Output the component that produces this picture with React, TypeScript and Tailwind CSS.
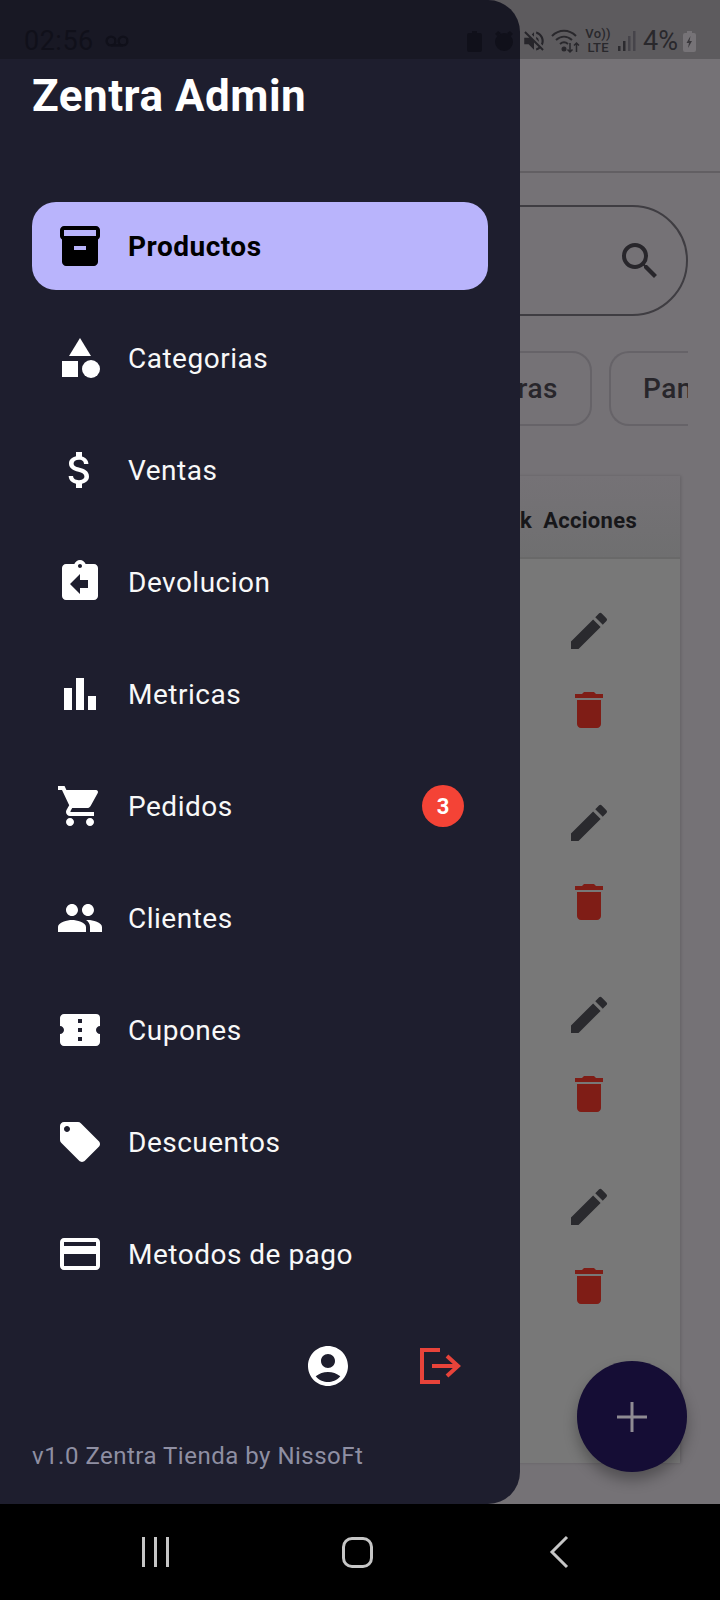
import {
  MdAccountCircle,
  MdAssignmentReturn,
  MdAttachMoney,
  MdBarChart,
  MdCategory,
  MdConfirmationNumber,
  MdCreditCard,
  MdDelete,
  MdEdit,
  MdInventory2,
  MdLocalOffer,
  MdPeople,
  MdSearch,
  MdShoppingCart,
  MdVolumeOff,
} from "react-icons/md";

const menuItems = [
  { label: "Productos", icon: MdInventory2, active: true },
  { label: "Categorias", icon: MdCategory },
  { label: "Ventas", icon: MdAttachMoney },
  { label: "Devolucion", icon: MdAssignmentReturn },
  { label: "Metricas", icon: MdBarChart },
  { label: "Pedidos", icon: MdShoppingCart, badge: 3 },
  { label: "Clientes", icon: MdPeople },
  { label: "Cupones", icon: MdConfirmationNumber },
  { label: "Descuentos", icon: MdLocalOffer },
  { label: "Metodos de pago", icon: MdCreditCard },
];

function StatusBar() {
  return (
    <div className="absolute top-0 left-0 z-20 flex h-[59px] w-full items-center bg-black/20 pt-[23px] pr-[24px] pl-[24px] text-[#10101a]">
      <span className="text-[27px] leading-none tracking-[0.5px]">02:56</span>
      <svg className="ml-[11px] h-[12px] w-[24px]" viewBox="0 0 24 12" fill="none" stroke="currentColor" strokeWidth="2.4">
        <circle cx="6" cy="6" r="4.4" />
        <circle cx="18" cy="6" r="4.4" />
        <path d="M6 10.4h12" />
      </svg>
      <div className="ml-auto flex items-center">
        <svg className="h-[21px] w-[15px]" viewBox="0 0 15 21" fill="currentColor">
          <path d="M5 0h5v2h3a2 2 0 0 1 2 2v15a2 2 0 0 1-2 2H2a2 2 0 0 1-2-2V4a2 2 0 0 1 2-2h3z" />
        </svg>
        <svg className="ml-[13px] h-[20px] w-[18px]" viewBox="0 0 18 20" fill="currentColor">
          <path d="M3 0l3 2-4 3-2-2zM15 0l3 3-2 2-4-3zM9 2a9 9 0 1 1 0 18A9 9 0 0 1 9 2z" />
        </svg>
        <MdVolumeOff className="ml-[8px] h-[26px] w-[26px] text-[#26252a]" />
        <svg className="ml-[4px] h-[26px] w-[29px] text-[#29282c]" viewBox="0 0 29 26" fill="none" stroke="currentColor" strokeWidth="2">
          <path d="M1 8c7-7 17-7 24 0M5 12c5-4.500 11-4.500 16 0M9 16c3-2.500 5-2.500 8 0" />
          <circle cx="13" cy="21" r="1.500" fill="currentColor" />
          <path d="M19 15v9m-2.500-2.500L19 24l2.500-2.500M25.500 24v-9M23 17.500l2.500-2.500 2.500 2.500" strokeWidth="1.500" />
        </svg>
        <div className="ml-[7px] flex w-[22px] flex-col items-center text-[13px] leading-[14px] font-medium tracking-[0.2px] text-[#29282c]">
          <span>Vo))</span>
          <span>LTE</span>
        </div>
        <svg className="ml-[9px] h-[22px] w-[18px]" viewBox="0 0 18 22">
          <rect x="0" y="16" width="2.500" height="5" fill="#2c2b2f" />
          <rect x="5" y="11" width="2.500" height="10" fill="#2c2b2f" />
          <rect x="10" y="6" width="2.500" height="15" fill="#46444a" />
          <rect x="15" y="1" width="2.500" height="20" fill="#46444a" />
        </svg>
        <span className="ml-[7px] text-[27px] leading-none text-[#29282c]">4%</span>
        <svg className="ml-[5px] h-[21px] w-[13px]" viewBox="0 0 13 21">
          <path d="M4 0h5v2h2a2 2 0 0 1 2 2v15a2 2 0 0 1-2 2H2a2 2 0 0 1-2-2V4a2 2 0 0 1 2-2h2z" fill="#767377" />
          <path d="M7.500 5L3.500 12h2.500l-1 5 4-7H6.500z" fill="#3a383c" />
        </svg>
      </div>
    </div>
  );
}

function BackgroundPage() {
  return (
    <div className="flex h-[1504px] flex-col bg-[#757276] text-[#28262b]">
      <div className="h-[173px] shrink-0 border-b-2 border-[#625f63]" />
      <div className="flex flex-col pr-[32px] pl-[33px]">
        <div className="mt-[32px] flex h-[111px] items-center justify-end rounded-full border-2 border-[#3f3d42] pr-[22px]">
          <MdSearch className="h-[48px] w-[48px]" />
        </div>
        <div className="mt-[35px] flex h-[75px] justify-end gap-[17px] overflow-hidden">
          <div className="flex w-[300px] shrink-0 items-center justify-end rounded-[20px] border-2 border-[#666368] pr-[32px] text-[28px] font-medium tracking-[0.5px]">
            Camperas
          </div>
          <div className="flex w-[79px] shrink-0 items-center overflow-hidden rounded-l-[20px] border-y-2 border-l-2 border-[#666368] pl-[32px] text-[28px] font-medium tracking-[0.5px]">
            Pantalones
          </div>
        </div>
      </div>
      <div className="mt-[50px] mr-[40px] ml-[33px] flex h-[987px] flex-col overflow-hidden bg-[#787878] shadow-[1px_0_3px_rgba(0,0,0,0.15)]">
        <div className="flex h-[83px] shrink-0 items-center justify-end border-b-2 border-[#696969] bg-gradient-to-b from-[#757276] to-[#6f6f70] pt-[7px] pr-[43px] text-[22px] font-bold tracking-[0.3px] text-[#17171a]">
          <span className="mr-[11px]">Stock</span>
          <span>Acciones</span>
        </div>
        {[0, 1, 2, 3].map((row) => (
          <div key={row} className="flex h-[192px] shrink-0 flex-col items-end pt-[48px] pr-[67px]">
            <MdEdit className="h-[48px] w-[48px] text-[#2a2a2e]" />
            <MdDelete className="mt-[31px] h-[48px] w-[48px] text-[#7f1d16]" />
          </div>
        ))}
      </div>
      <button className="absolute top-[1361px] left-[577px] flex h-[111px] w-[110px] items-center justify-center rounded-full bg-[#150d35] text-[#8f8b93] shadow-[0_8px_14px_rgba(0,0,0,0.3)]">
        <svg className="h-[30px] w-[30px]" viewBox="0 0 30 30" fill="none" stroke="currentColor" strokeWidth="3">
          <path d="M15 0v30M0 15h30" />
        </svg>
      </button>
    </div>
  );
}

function DrawerItem({ item }: { item: any }) {
  const Icon = item.icon;
  return (
    <div
      className={`mb-[24px] flex h-[88px] items-center rounded-[24px] pr-[24px] pl-[24px] ${
        item.active ? "bg-[#b9b4fc] text-black" : "text-[#f8f8f8]"
      }`}
    >
      <Icon className={`h-[48px] w-[48px] shrink-0 ${item.active ? "" : "text-white"}`} />
      <span className={`mt-[2px] ml-[24px] text-[28px] tracking-[0.5px] ${item.active ? "font-bold" : ""}`}>
        {item.label}
      </span>
      {item.badge && (
        <span className="ml-auto flex h-[42px] w-[42px] items-center justify-center rounded-full bg-[#f44336] text-[22px] font-bold text-white">
          {item.badge}
        </span>
      )}
    </div>
  );
}

function Drawer() {
  return (
    <div className="absolute top-0 left-0 z-10 flex h-[1504px] w-[520px] flex-col rounded-r-[32px] bg-[#1e1e2e] pr-[32px] pl-[32px] text-white">
      <h1 className="mt-[66px] mb-[46px] h-[60px] text-[44px] leading-[60px] font-bold tracking-[0.5px]">Zentra Admin</h1>
      <nav className="mt-[30px] flex flex-col">
        {menuItems.map((item) => (
          <DrawerItem key={item.label} item={item} />
        ))}
      </nav>
      <div className="mt-[20px] flex h-[48px] items-center">
        <MdAccountCircle className="ml-[272px] h-[48px] w-[48px] text-white" />
        <svg className="ml-[64px] h-[48px] w-[48px] text-[#e8433a]" viewBox="0 0 48 48" fill="none" stroke="currentColor" strokeWidth="4">
          <path d="M24 8H6v32h18" />
          <path d="M16 24h26M31 14l11 10-11 10" />
        </svg>
      </div>
      <p className="mt-[48px] text-[24px] tracking-[0.5px] text-[#8f8fa3]">v1.0 Zentra Tienda by NissoFt</p>
    </div>
  );
}

function NavBar() {
  return (
    <div className="flex h-[96px] items-center bg-black text-[#c6c6c6]">
      <div className="ml-[142px] flex gap-[9px]">
        <span className="h-[30px] w-[3px] bg-[#c6c6c6]" />
        <span className="h-[30px] w-[3px] bg-[#c6c6c6]" />
        <span className="h-[30px] w-[3px] bg-[#c6c6c6]" />
      </div>
      <div className="ml-[173px] h-[31px] w-[31px] rounded-[10px] border-[3px] border-[#c6c6c6]" />
      <svg className="ml-[176px] h-[34px] w-[20px]" viewBox="0 0 20 34" fill="none" stroke="currentColor" strokeWidth="3">
        <path d="M18 2L3 17l15 15" />
      </svg>
    </div>
  );
}

export default function App() {
  return (
    <div className="relative h-[1600px] w-[720px] overflow-hidden font-['Roboto',sans-serif]">
      <BackgroundPage />
      <Drawer />
      <StatusBar />
      <NavBar />
    </div>
  );
}
